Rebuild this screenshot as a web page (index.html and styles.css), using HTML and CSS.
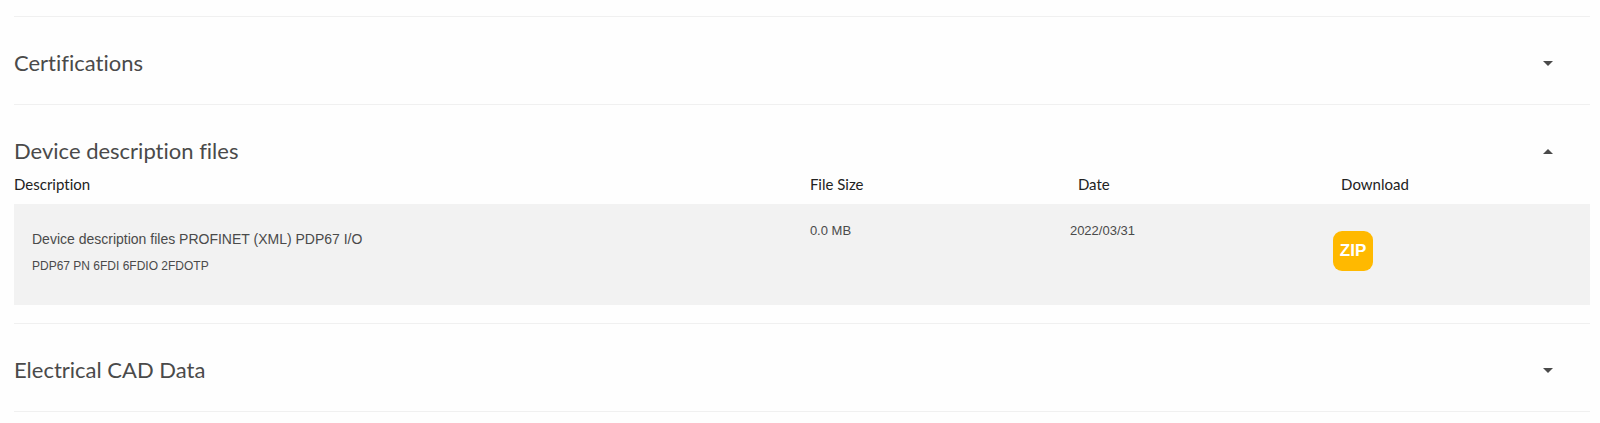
FILE: index.html
```
<!DOCTYPE html>
<html lang="en">
<head>
    <meta charset="UTF-8">
    <meta name="viewport" content="width=device-width, initial-scale=1.0">
    <title>Downloads</title>
    <link rel="stylesheet" href="styles.css">
</head>
<body>
    <main class="accordion">
        <section class="section">
            <h2 class="section-title">
                <button class="toggle" type="button" aria-expanded="false">Certifications<span class="arrow"></span></button>
            </h2>
        </section>

        <section class="section">
            <h2 class="section-title">
                <button class="toggle" type="button" aria-expanded="true" aria-controls="device-files">Device description files<span class="arrow"></span></button>
            </h2>
            <div class="panel" id="device-files">
                <table class="files">
                    <thead>
                        <tr>
                            <th class="col-description">Description</th>
                            <th class="col-size">File Size</th>
                            <th class="col-date">Date</th>
                            <th class="col-download">Download</th>
                        </tr>
                    </thead>
                    <tbody>
                        <tr>
                            <td class="description">
                                <p class="file-name">Device description files PROFINET (XML) PDP67 I/O</p>
                                <p class="file-models">PDP67 PN 6FDI 6FDIO 2FDOTP</p>
                            </td>
                            <td>0.0 MB</td>
                            <td>2022/03/31</td>
                            <td class="download"><a class="zip" href="#">ZIP</a></td>
                        </tr>
                    </tbody>
                </table>
            </div>
        </section>

        <section class="section">
            <h2 class="section-title">
                <button class="toggle" type="button" aria-expanded="false">Electrical CAD Data<span class="arrow"></span></button>
            </h2>
        </section>
    </main>

    <script>
        document.querySelectorAll(".toggle").forEach((button) => {
            button.addEventListener("click", () => {
                const open = button.getAttribute("aria-expanded") === "true";
                const panel = document.getElementById(button.getAttribute("aria-controls"));

                button.setAttribute("aria-expanded", String(!open));
                if (panel) {
                    panel.hidden = open;
                }
            });
        });
    </script>
</body>
</html>
```
FILE: styles.css
```
* {
    box-sizing: border-box;
}
body {
    margin: 0;
    background: #fefefe;
    color: #4a4a4a;
    font-family: "Liberation Sans", Arial, sans-serif;
    font-size: 13px;
}
.accordion {
    margin: 16px 10px 0 14px;
    border-bottom: 1px solid #f0f0f0;
}
.section {
    border-top: 1px solid #f0f0f0;
}
.section-title {
    margin: 0;
}
.toggle {
    display: flex;
    justify-content: space-between;
    align-items: center;
    width: 100%;
    padding: 32px 37px 27px 0;
    border: 0;
    background: none;
    color: #4a4a4a;
    font-family: Lato, sans-serif;
    font-size: 22px;
    font-variant-ligatures: none;
    font-weight: 400;
    line-height: 28px;
    text-align: left;
    cursor: pointer;
}
.toggle[aria-expanded="true"] {
    padding-bottom: 0;
}
.arrow {
    border: 5px solid transparent;
    border-top-color: #4a4a4a;
    border-bottom-width: 0;
}
.toggle[aria-expanded="true"] .arrow {
    border-top-width: 0;
    border-bottom: 5px solid #4a4a4a;
}
.panel {
    padding-bottom: 18px;
}
.files {
    width: 100%;
    border-collapse: collapse;
    table-layout: fixed;
}
.files th {
    height: 39px;
    padding: 0 0 2px;
    color: #222;
    font-family: Lato, sans-serif;
    font-size: 15px;
    font-variant-ligatures: none;
    font-weight: 400;
    line-height: 20px;
    text-align: left;
    vertical-align: middle;
}
.files td {
    height: 101px;
    padding: 18px 0;
    background: #f2f2f2;
    line-height: 18px;
    vertical-align: top;
}
.files .description {
    padding: 23px 18px;
}
.files .download {
    padding: 27px 0;
}
.files .col-date,
.files .col-download {
    padding-left: 8px;
}
.col-description {
    width: 50.5%;
}
.col-size {
    width: 16.5%;
}
.col-date {
    width: 16.7%;
}
.file-name {
    margin: 0 0 6px;
    font-size: 14px;
    line-height: 24px;
}
.file-models {
    margin: 0;
    font-size: 12px;
}
/* download badge */
.zip {
    display: flex;
    justify-content: center;
    align-items: center;
    width: 40px;
    height: 40px;
    border-radius: 9px;
    background: #ffb900;
    color: #fff;
    font-family: "Liberation Sans", Arial, sans-serif;
    font-size: 17px;
    font-weight: 700;
    text-decoration: none;
}
```
